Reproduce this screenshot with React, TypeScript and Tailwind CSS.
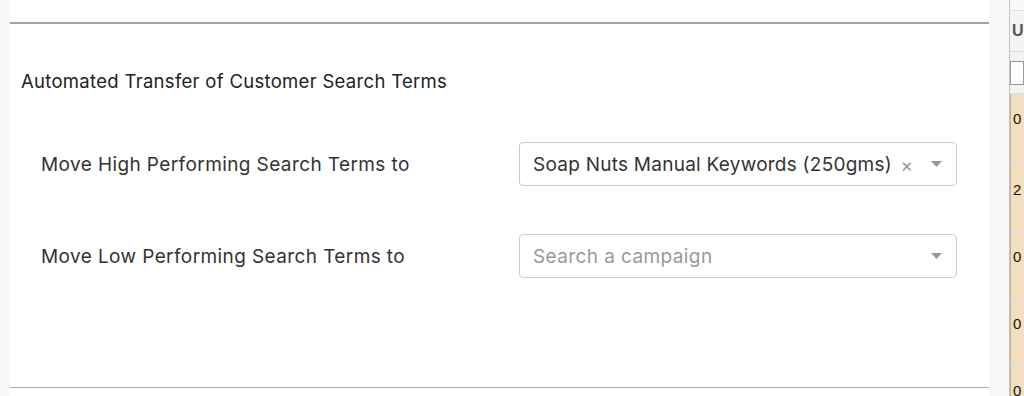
import React from "react";

const font = { fontFamily: "Inter, 'Noto Sans', sans-serif" };

function Caret() {
  return (
    <svg width="11" height="6" viewBox="0 0 11 6" className="shrink-0">
      <path d="M0 0 L11 0 L5.5 6 Z" fill="#999" />
    </svg>
  );
}

function Select({ value, placeholder }: { value?: string; placeholder?: string }) {
  return (
    <div className="flex h-[44px] w-[438px] items-center rounded-[4px] border border-[#cccccc] bg-white pl-[13px] pr-[14px]">
      <div className={`min-w-0 flex-1 whitespace-nowrap pt-[2px] text-[19px] leading-[24px] ${value ? "tracking-[0.25px] text-[#333333]" : "tracking-[0.4px] text-[#999999]"}`}>
        {value ?? placeholder}
      </div>
      {value && <span className="ml-[4px] mr-[18px] shrink-0 pt-[2px] text-[19px] leading-none text-[#999999]">×</span>}
      <Caret />
    </div>
  );
}

function Row({ label, children }: { label: string; children: React.ReactNode }) {
  return (
    <div className="flex h-[44px] items-center">
      <div className="w-[509px] shrink-0 pl-[31px] pt-[2px] text-[19px] leading-[24px] tracking-[0.4px] text-[#333333]">{label}</div>
      {children}
    </div>
  );
}

export default function App() {
  const nums = ["0", "2", "0", "0", "0"];
  return (
    <div className="flex h-[396px] w-[1024px] overflow-hidden bg-white" style={font}>
      <div className="w-[10px] shrink-0 bg-[#f7f7f7]" />
      <div className="flex w-[979px] shrink-0 flex-col pt-[22px]">
        <div className="flex h-[366px] flex-col border-y border-t-2 border-t-[#a3a3a3] border-b-[#ababab]">
          <div className="pl-[11px] pt-[45px] text-[18.5px] leading-[24px] tracking-[0.3px] text-[#222222]">
            Automated Transfer of Customer Search Terms
          </div>
          <div className="mt-[49px] flex flex-col gap-[48px]">
            <Row label="Move High Performing Search Terms to">
              <Select value="Soap Nuts Manual Keywords (250gms)" />
            </Row>
            <Row label="Move Low Performing Search Terms to">
              <Select placeholder="Search a campaign" />
            </Row>
          </div>
        </div>
      </div>
      <div className="w-[20px] shrink-0 bg-[#f7f7f7]" />
      <div className="flex w-[15px] shrink-0 flex-col overflow-hidden border-l border-[#c4c4c4]" style={{ fontFamily: "'Liberation Sans', sans-serif" }}>
        <div className="h-[10px] shrink-0 bg-[#f9f9f9]" />
        <div className="flex h-[42px] shrink-0 items-center border-y border-[#dddddd] bg-[#f3f3f3] pl-[2px] text-[16px] font-bold text-[#555555]">
          U
        </div>
        <div className="flex h-[41px] shrink-0 items-start bg-[#f3f3f3] pt-[9px]">
          <div className="h-[24px] w-full border border-[#999999] bg-white" />
        </div>
        {nums.map((n, i) => (
          <div
            key={i}
            className={`flex ${i === 0 ? "h-[71px]" : "h-[67px]"} shrink-0 items-start border-l border-t-2 border-l-[#c9b08a] border-t-[#dedede] bg-[#f2dfbf] pl-[2px] pt-[15px] text-[15px] leading-[17px] text-[#111111]`}
          >
            {n}
          </div>
        ))}
      </div>
    </div>
  );
}
